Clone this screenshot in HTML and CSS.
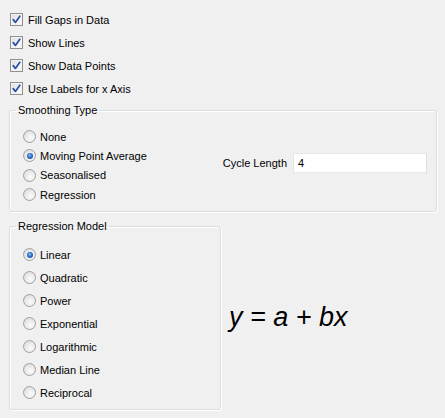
FILE: index.html
```html
<!DOCTYPE html>
<html>
<head>
<meta charset="utf-8">
<link rel="stylesheet" href="styles.css">
</head>
<body>
<div class="panel">
  <div class="checks">
    <label class="row"><span class="cb"><svg viewBox="0 0 13 13" width="13" height="13"><path d="M3.2 6.6 L5.4 9.4 L9.8 3.2" fill="none" stroke="#2a4fa8" stroke-width="1.7" stroke-linecap="round" stroke-linejoin="round"/></svg></span>Fill Gaps in Data</label>
    <label class="row"><span class="cb"><svg viewBox="0 0 13 13" width="13" height="13"><path d="M3.2 6.6 L5.4 9.4 L9.8 3.2" fill="none" stroke="#2a4fa8" stroke-width="1.7" stroke-linecap="round" stroke-linejoin="round"/></svg></span>Show Lines</label>
    <label class="row"><span class="cb"><svg viewBox="0 0 13 13" width="13" height="13"><path d="M3.2 6.6 L5.4 9.4 L9.8 3.2" fill="none" stroke="#2a4fa8" stroke-width="1.7" stroke-linecap="round" stroke-linejoin="round"/></svg></span>Show Data Points</label>
    <label class="row"><span class="cb"><svg viewBox="0 0 13 13" width="13" height="13"><path d="M3.2 6.6 L5.4 9.4 L9.8 3.2" fill="none" stroke="#2a4fa8" stroke-width="1.7" stroke-linecap="round" stroke-linejoin="round"/></svg></span>Use Labels for x Axis</label>
  </div>

  <fieldset class="group smoothing">
    <legend>Smoothing Type</legend>
    <div class="smooth-body">
      <div class="radios tight">
        <label class="rrow"><span class="rb"></span>None</label>
        <label class="rrow"><span class="rb on"></span>Moving Point Average</label>
        <label class="rrow"><span class="rb"></span>Seasonalised</label>
        <label class="rrow"><span class="rb"></span>Regression</label>
      </div>
      <div class="cycle">
        <span class="cycle-label">Cycle Length</span>
        <span class="textbox">4</span>
      </div>
    </div>
  </fieldset>

  <div class="bottom">
    <fieldset class="group regression">
      <legend>Regression Model</legend>
      <div class="radios loose">
        <label class="rrow"><span class="rb on"></span>Linear</label>
        <label class="rrow"><span class="rb"></span>Quadratic</label>
        <label class="rrow"><span class="rb"></span>Power</label>
        <label class="rrow"><span class="rb"></span>Exponential</label>
        <label class="rrow"><span class="rb"></span>Logarithmic</label>
        <label class="rrow"><span class="rb"></span>Median Line</label>
        <label class="rrow"><span class="rb"></span>Reciprocal</label>
      </div>
    </fieldset>
    <div class="formula">y = a + bx</div>
  </div>
</div>
</body>
</html>
```

FILE: styles.css
```css
html, body {
  margin: 0;
  padding: 0;
  background: #f0f0f0;
}
body {
  width: 445px;
  height: 418px;
  overflow: hidden;
  font-family: "Liberation Sans", Arial, sans-serif;
  font-size: 11px;
  color: #000;
}
.panel {
  padding: 8px 8px 0 9px;
}
.checks {
  display: flex;
  flex-direction: column;
  padding-left: 1px;
}
.row {
  display: flex;
  align-items: center;
  height: 23px;
  gap: 5px;
}
.cb {
  width: 11px;
  height: 11px;
  border: 1px solid #8e8f8f;
  background: linear-gradient(135deg, #dcdcdc 0%, #f4f4f4 60%, #fbfbfb 100%);
  box-shadow: inset 0 0 0 1px #f4f4f4;
  position: relative;
  flex: none;
}
.cb svg {
  position: absolute;
  left: -1px;
  top: -1px;
}
.group {
  margin: 0;
  padding: 0;
  border: 1px solid #d5dfe5;
  border-radius: 3px;
  box-shadow: 1px 1px 0 #fff, inset 1px 1px 0 #fff;
  min-width: 0;
}
.group legend {
  margin-left: 6px;
  padding: 0 2px;
  line-height: 13px;
}
.smoothing {
  margin-top: 4px;
  width: 428px;
  height: 108px;
  box-sizing: border-box;
}
.smooth-body {
  display: flex;
  padding: 10px 0 0 13px;
}
.radios {
  display: flex;
  flex-direction: column;
}
.tight .rrow { height: 19.3px; }
.loose .rrow { height: 23px; }
.rrow {
  display: flex;
  align-items: center;
  gap: 4px;
}
.rb {
  width: 11px;
  height: 11px;
  border-radius: 50%;
  border: 1px solid #a0a0a0;
  background: radial-gradient(circle at 60% 65%, #fbfbfb 0%, #e8e8e8 55%, #d2d2d2 100%);
  flex: none;
  position: relative;
}
.rb.on::after {
  content: "";
  position: absolute;
  left: 2.5px;
  top: 2.5px;
  width: 6px;
  height: 6px;
  border-radius: 50%;
  background: radial-gradient(circle at 45% 40%, #8ec5f5 0%, #2c6fc2 45%, #0c3a86 100%);
}
.cycle {
  display: flex;
  align-items: center;
  margin-left: 76px;
  margin-top: 26px;
  height: 20px;
  gap: 6px;
}
.textbox {
  width: 128px;
  height: 18px;
  line-height: 18px;
  border: 1px solid #abadb3;
  border-top-color: #e3e9ef;
  border-left-color: #e2e3ea;
  border-right-color: #dbdfe6;
  border-bottom-color: #e3e9ef;
  background: #fff;
  padding-left: 4px;
  box-sizing: content-box;
}
.bottom {
  display: flex;
  align-items: center;
  margin-top: 8px;
}
.regression {
  width: 212px;
  height: 190px;
  box-sizing: border-box;
}
.regression .radios {
  padding: 10px 0 0 13px;
}
.formula {
  font-style: italic;
  font-size: 27px;
  margin-left: 8px;
  margin-top: 4px;
  color: #000;
}
```
